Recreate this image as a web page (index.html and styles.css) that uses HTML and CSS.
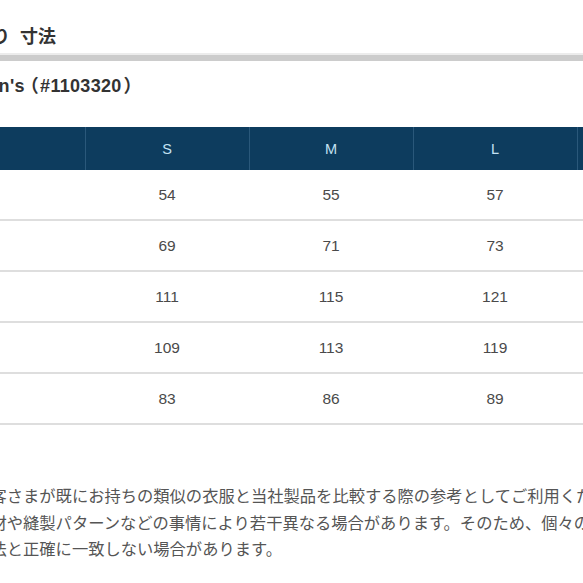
FILE: index.html
```html
<!DOCTYPE html>
<html lang="ja">
<head>
<meta charset="utf-8">
<title>仕上がり寸法</title>
<link rel="stylesheet" href="styles.css">
</head>
<body>
<main class="page">
  <h2 class="title">仕上がり 寸法</h2>
  <div class="bar"></div>
  <h3 class="subtitle">Men's<span class="paren-open">（</span>#1103320<span class="paren-close">）</span></h3>
  <table class="size-table">
    <colgroup>
      <col class="col-label">
      <col class="col-size">
      <col class="col-size">
      <col class="col-size">
      <col class="col-size">
    </colgroup>
    <thead>
      <tr><th>サイズ</th><th>S</th><th>M</th><th>L</th><th>XL</th></tr>
    </thead>
    <tbody>
      <tr><td>身幅</td><td>54</td><td>55</td><td>57</td><td>59</td></tr>
      <tr><td>着丈</td><td>69</td><td>71</td><td>73</td><td>75</td></tr>
      <tr><td>ゆき丈</td><td>111</td><td>115</td><td>121</td><td>127</td></tr>
      <tr><td>胸囲</td><td>109</td><td>113</td><td>119</td><td>125</td></tr>
      <tr><td>袖丈</td><td>83</td><td>86</td><td>89</td><td>92</td></tr>
    </tbody>
  </table>
  <p class="note">お客さまが既にお持ちの類似の衣服と当社製品を比較する際の参考としてご利用ください。<br>素材や縫製パターンなどの事情により若干異なる場合があります。そのため、個々の商品の<br>寸法と正確に一致しない場合があります。</p>
</main>
</body>
</html>
```

FILE: styles.css
```css
html, body {
  margin: 0;
  padding: 0;
  background: #ffffff;
  overflow: hidden;
}

body {
  width: 583px;
  height: 583px;
  font-family: "Liberation Sans", "Noto Sans CJK JP", sans-serif;
  color: #444;
}

.page {
  display: flex;
  flex-direction: column;
  align-items: flex-start;
}

.title {
  margin: 23px 0 0 -62px;
  font-family: "Noto Sans CJK JP", sans-serif;
  font-size: 18px;
  line-height: 24px;
  font-weight: 700;
  word-spacing: 6px;
  color: #333;
  white-space: nowrap;
}

.bar {
  align-self: stretch;
  margin-top: 6px;
  height: 6px;
  background: #cccccc;
  border-top: 2px solid #ececec;
}

.subtitle {
  margin: 13px 0 0 -27px;
  height: 24px;
  font-size: 18px;
  line-height: 24px;
  font-weight: 700;
  letter-spacing: 0.3px;
  color: #333;
  white-space: nowrap;
}

.paren-open,
.paren-close {
  font-family: "Noto Sans CJK JP", sans-serif;
  font-feature-settings: "halt";
  line-height: 1;
}

.paren-open {
  margin-left: 5px;
  margin-right: 1px;
}

.paren-close {
  margin-left: 2px;
}

.size-table {
  margin: 29px 0 0 -120px;
  width: 861px;
  table-layout: fixed;
  border-collapse: collapse;
  border-spacing: 0;
}

.col-label { width: 205px; }
.col-size { width: 164px; }

.size-table th {
  height: 43px;
  padding: 0;
  background: #0d3c5e;
  color: #c4e2f3;
  font-size: 14.5px;
  font-weight: 400;
  text-align: center;
  border-left: 1px solid #2a587a;
}

.size-table th:first-child,
.size-table td:first-child {
  border-left: none;
  text-align: left;
  padding-left: 10px;
}

.size-table td {
  height: 49px;
  padding: 0;
  text-align: center;
  font-size: 15.5px;
  color: #4a4a4a;
  border-bottom: 2px solid #dedede;
}

.note {
  margin: 57px 0 0 -25.8px;
  font-family: "Noto Sans CJK JP", sans-serif;
  font-size: 16.3px;
  line-height: 26.5px;
  color: #555;
  white-space: nowrap;
}
```
